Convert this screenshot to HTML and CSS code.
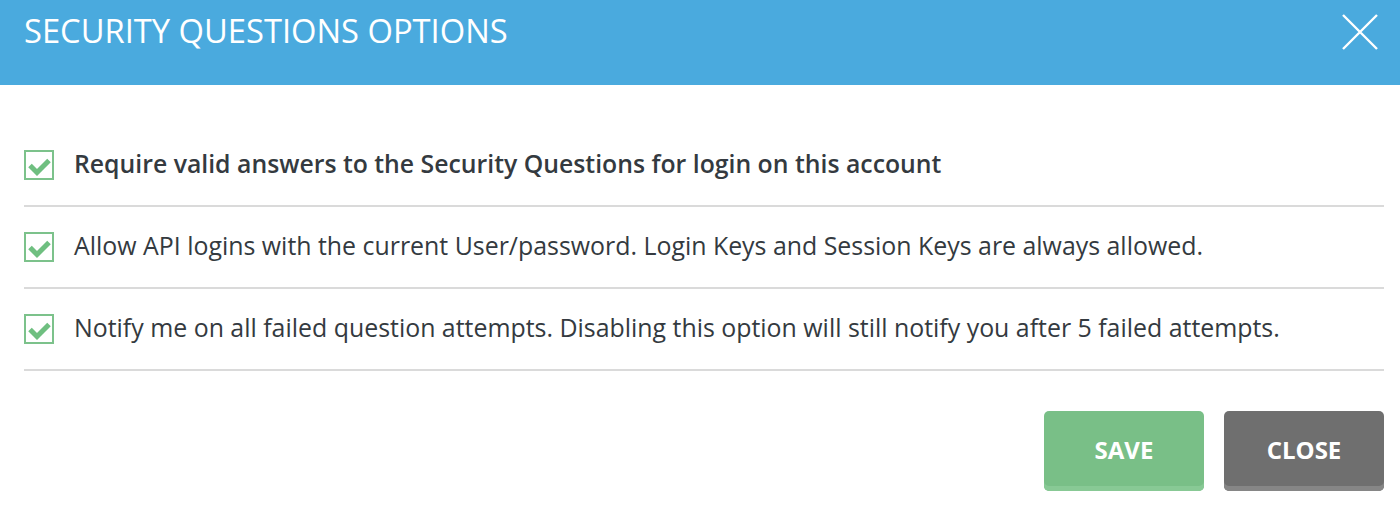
FILE: index.html
```html
<!DOCTYPE html>
<html>
<head>
<meta charset="utf-8">
<link rel="stylesheet" href="styles.css">
</head>
<body>
<div class="modal">
  <div class="header">
    <h1 class="title">SECURITY QUESTIONS OPTIONS</h1>
    <button class="close-x" aria-label="Close">
      <svg width="36" height="36" viewBox="0 0 36 36"><path d="M1 1L35 35M35 1L1 35" stroke="#fff" stroke-width="2.4" fill="none"/></svg>
    </button>
  </div>
  <div class="body">
    <div class="row">
      <span class="check"><svg width="26" height="26" viewBox="0 0 26 26"><path d="M4 13.5L11 20.5L23 8.5" stroke="#6fbf80" stroke-width="5" fill="none"/></svg></span>
      <span class="label bold">Require valid answers to the Security Questions for login on this account</span>
    </div>
    <div class="row">
      <span class="check"><svg width="26" height="26" viewBox="0 0 26 26"><path d="M4 13.5L11 20.5L23 8.5" stroke="#6fbf80" stroke-width="5" fill="none"/></svg></span>
      <span class="label">Allow API logins with the current User/password. Login Keys and Session Keys are always allowed.</span>
    </div>
    <div class="row">
      <span class="check"><svg width="26" height="26" viewBox="0 0 26 26"><path d="M4 13.5L11 20.5L23 8.5" stroke="#6fbf80" stroke-width="5" fill="none"/></svg></span>
      <span class="label">Notify me on all failed question attempts. Disabling this option will still notify you after 5 failed attempts.</span>
    </div>
    <div class="actions">
      <button class="btn btn-save">SAVE</button>
      <button class="btn btn-close">CLOSE</button>
    </div>
  </div>
</div>
</body>
</html>
```
FILE: styles.css
```css
* { box-sizing: border-box; }
html, body { margin: 0; padding: 0; background: #fff; }
body { font-family: "Open Sans", "DejaVu Sans", sans-serif; color: #343a40; }
.header {
  height: 85px;
  background: #4aaade;
  display: flex;
  align-items: center;
  justify-content: space-between;
  padding: 0 22px 0 24px;
}
.title {
  margin: 0;
  font-weight: 400;
  font-size: 32.7px;
  color: #fff;
  letter-spacing: 0;
  position: relative;
  top: -12px;
}
.close-x {
  background: none;
  border: 0;
  padding: 0;
  width: 36px;
  height: 36px;
  position: relative;
  top: -11px;
}
.close-x svg { display: block; }
.body { padding: 40px 16px 0 24px; }
.row {
  height: 82px;
  border-bottom: 2px solid #dadada;
  display: flex;
  align-items: center;
  gap: 20px;
}
.check {
  width: 30px;
  height: 30px;
  border: 2px solid #7cc28b;
  flex: none;
  display: flex;
  align-items: center;
  justify-content: center;
}
.check svg { display: block; }
.label { font-size: 24.9px; position: relative; top: -2px; }
.label.bold { font-weight: 600; font-size: 24.8px; }
.actions {
  display: flex;
  justify-content: flex-end;
  gap: 20px;
  padding-top: 40px;
}
.btn {
  width: 160px;
  height: 80px;
  border: 0;
  border-radius: 5px;
  font-family: "Open Sans", sans-serif;
  font-weight: 700;
  font-size: 24px;
  color: #fff;
  padding: 0 0 4px;
}
.btn-save { background: #79bf87; box-shadow: inset 0 -5px 0 #88c995; }
.btn-close { background: #6f6f6f; box-shadow: inset 0 -5px 0 #868686; }
```
